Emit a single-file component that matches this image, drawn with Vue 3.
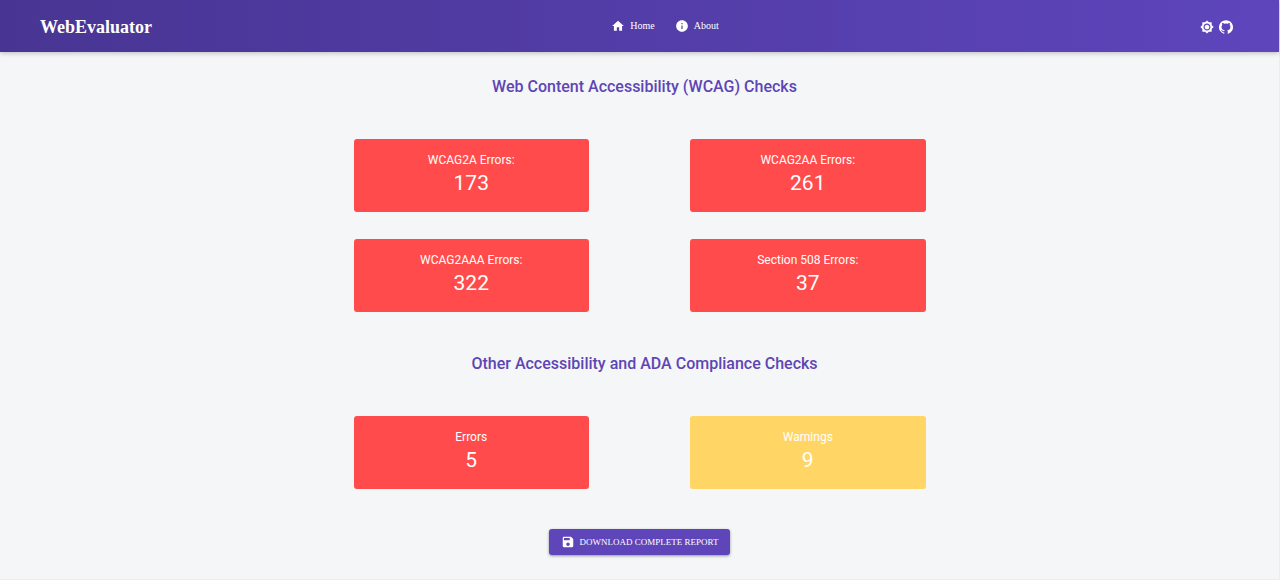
<script setup>
const wcagResults = [
  { label: 'WCAG2A Errors:', value: 173, kind: 'error' },
  { label: 'WCAG2AA Errors:', value: 261, kind: 'error' },
  { label: 'WCAG2AAA Errors:', value: 322, kind: 'error' },
  { label: 'Section 508 Errors:', value: 37, kind: 'error' },
]

const otherResults = [
  { label: 'Errors', value: 5, kind: 'error' },
  { label: 'Warnings', value: 9, kind: 'warning' },
]
</script>

<template>
  <div class="page">
    <header class="topbar">
      <a class="brand" href="#">WebEvaluator</a>
      <nav class="nav">
        <a class="nav-link" href="#home">
          <svg class="icon" viewBox="0 0 24 24" aria-hidden="true"><path d="M10 20v-6h4v6h5v-8h3L12 3 2 12h3v8z" /></svg>
          <span>Home</span>
        </a>
        <a class="nav-link" href="#about">
          <svg class="icon" viewBox="0 0 24 24" aria-hidden="true"><path d="M12 2C6.480 2 2 6.480 2 12s4.480 10 10 10 10-4.480 10-10S17.520 2 12 2zm1 15h-2v-6h2v6zm0-8h-2V7h2v2z" /></svg>
          <span>About</span>
        </a>
      </nav>
      <div class="actions">
        <button class="icon-button" type="button" aria-label="Toggle theme">
          <svg class="icon" viewBox="0 0 24 24" aria-hidden="true"><path d="M20 8.690V4h-4.690L12 .690 8.690 4H4v4.690L.690 12 4 15.310V20h4.690L12 23.310 15.310 20H20v-4.690L23.310 12 20 8.690zM12 18c-3.310 0-6-2.690-6-6s2.690-6 6-6 6 2.690 6 6-2.690 6-6 6zm0-10c-2.210 0-4 1.790-4 4s1.790 4 4 4 4-1.790 4-4-1.790-4-4-4z" /></svg>
        </button>
        <a class="icon-button" href="#github" aria-label="GitHub">
          <svg class="icon" viewBox="0 0 24 24" aria-hidden="true"><path d="M12 .3a12 12 0 0 0-3.800 23.400c.6.100.8-.3.8-.6v-2c-3.300.7-4-1.600-4-1.600-.6-1.400-1.400-1.800-1.400-1.800-1-.7.100-.7.100-.7 1.200 0 1.900 1.200 1.900 1.200 1 1.800 2.800 1.300 3.500 1 0-.8.4-1.300.7-1.600-2.700-.3-5.500-1.300-5.500-6 0-1.200.5-2.300 1.300-3.100-.2-.4-.6-1.600 0-3.200 0 0 1-.3 3.400 1.200a11.500 11.500 0 0 1 6 0c2.300-1.500 3.300-1.200 3.300-1.200.6 1.600.2 2.800 0 3.200.9.8 1.300 1.900 1.300 3.200 0 4.600-2.800 5.600-5.500 5.900.5.4.9 1 .9 2.200v3.300c0 .3.1.7.8.6A12 12 0 0 0 12 .3" /></svg>
        </a>
      </div>
    </header>

    <main class="content">
      <h2 class="title">Web Content Accessibility (WCAG) Checks</h2>
      <div class="grid">
        <section v-for="item in wcagResults" :key="item.label" class="card" :class="item.kind">
          <h3 class="label">{{ item.label }}</h3>
          <p class="value">{{ item.value }}</p>
        </section>
      </div>

      <h2 class="title">Other Accessibility and ADA Compliance Checks</h2>
      <div class="grid">
        <section v-for="item in otherResults" :key="item.label" class="card" :class="item.kind">
          <h3 class="label">{{ item.label }}</h3>
          <p class="value">{{ item.value }}</p>
        </section>
      </div>

      <button class="download" type="button">
        <svg class="icon" viewBox="0 0 24 24" aria-hidden="true"><path d="M17 3H5c-1.110 0-2 .9-2 2v14c0 1.100.890 2 2 2h14c1.100 0 2-.9 2-2V7l-4-4zm-5 16c-1.660 0-3-1.340-3-3s1.340-3 3-3 3 1.340 3 3-1.340 3-3 3zm3-10H5V5h10v4z" /></svg>
        <span>DOWNLOAD COMPLETE REPORT</span>
      </button>
    </main>
  </div>
</template>

<style>
body {
  background: #f4f6f8;
}
</style>

<style scoped>
.page {
  min-height: 100vh;
  box-sizing: border-box;
  border-right: 1px solid #ebedf0;
  border-bottom: 1px solid #ebedf0;
  background: #f4f6f8;
  font-family: Roboto, "Liberation Sans", sans-serif;
}

.topbar {
  display: grid;
  grid-template-columns: 1fr auto 1fr;
  align-items: center;
  height: 52px;
  padding: 0 46px 0 40px;
  background: linear-gradient(90deg, #483593, #5e45bc);
  box-shadow: 0 1px 5px rgba(0, 0, 0, 0.25);
  color: #fff;
  font-family: "Liberation Serif", serif;
}

.brand {
  padding-top: 2px;
  color: inherit;
  font-size: 18px;
  font-weight: 700;
  text-decoration: none;
}

.nav {
  display: flex;
  gap: 20px;
  padding-left: 57px;
}

.nav-link {
  display: flex;
  align-items: center;
  gap: 5px;
  color: inherit;
  font-size: 10px;
  line-height: 14px;
  text-decoration: none;
}

.icon {
  display: block;
  width: 14px;
  height: 14px;
  fill: currentColor;
}

.actions {
  display: flex;
  align-items: center;
  justify-content: flex-end;
  gap: 5px;
  padding-top: 2px;
}

.icon-button {
  padding: 0;
  border: 0;
  background: none;
  color: inherit;
  cursor: pointer;
}

.content {
  display: flex;
  flex-direction: column;
  align-items: center;
  gap: 40px;
  padding: 23px 0 24px;
}

.title {
  margin: 0;
  padding-left: 10px;
  color: #5e45b5;
  font-size: 16px;
  font-weight: 500;
  line-height: 24px;
  text-align: center;
}

.grid {
  display: grid;
  grid-template-columns: 1fr 1fr;
  gap: 27px 101px;
  width: 100%;
  max-width: 572px;
}

.card {
  padding: 12px 12px 15px;
  border-radius: 3px;
  color: #fff;
  text-align: center;
}

.error {
  background: #ff4b4b;
}

.warning {
  background: #ffd666;
}

.label {
  margin: 0;
  font-size: 12px;
  font-weight: 400;
  line-height: 18px;
}

.value {
  margin: 0;
  font-size: 21px;
  line-height: 28px;
}

.download {
  display: flex;
  align-items: center;
  gap: 5px;
  height: 26px;
  padding: 0 12px;
  border: 0;
  border-radius: 3px;
  background: #5e45b9;
  box-shadow: 0 1px 3px rgba(0, 0, 0, 0.4);
  color: #fff;
  font-family: "Liberation Serif", serif;
  font-size: 9px;
  cursor: pointer;
}
</style>
